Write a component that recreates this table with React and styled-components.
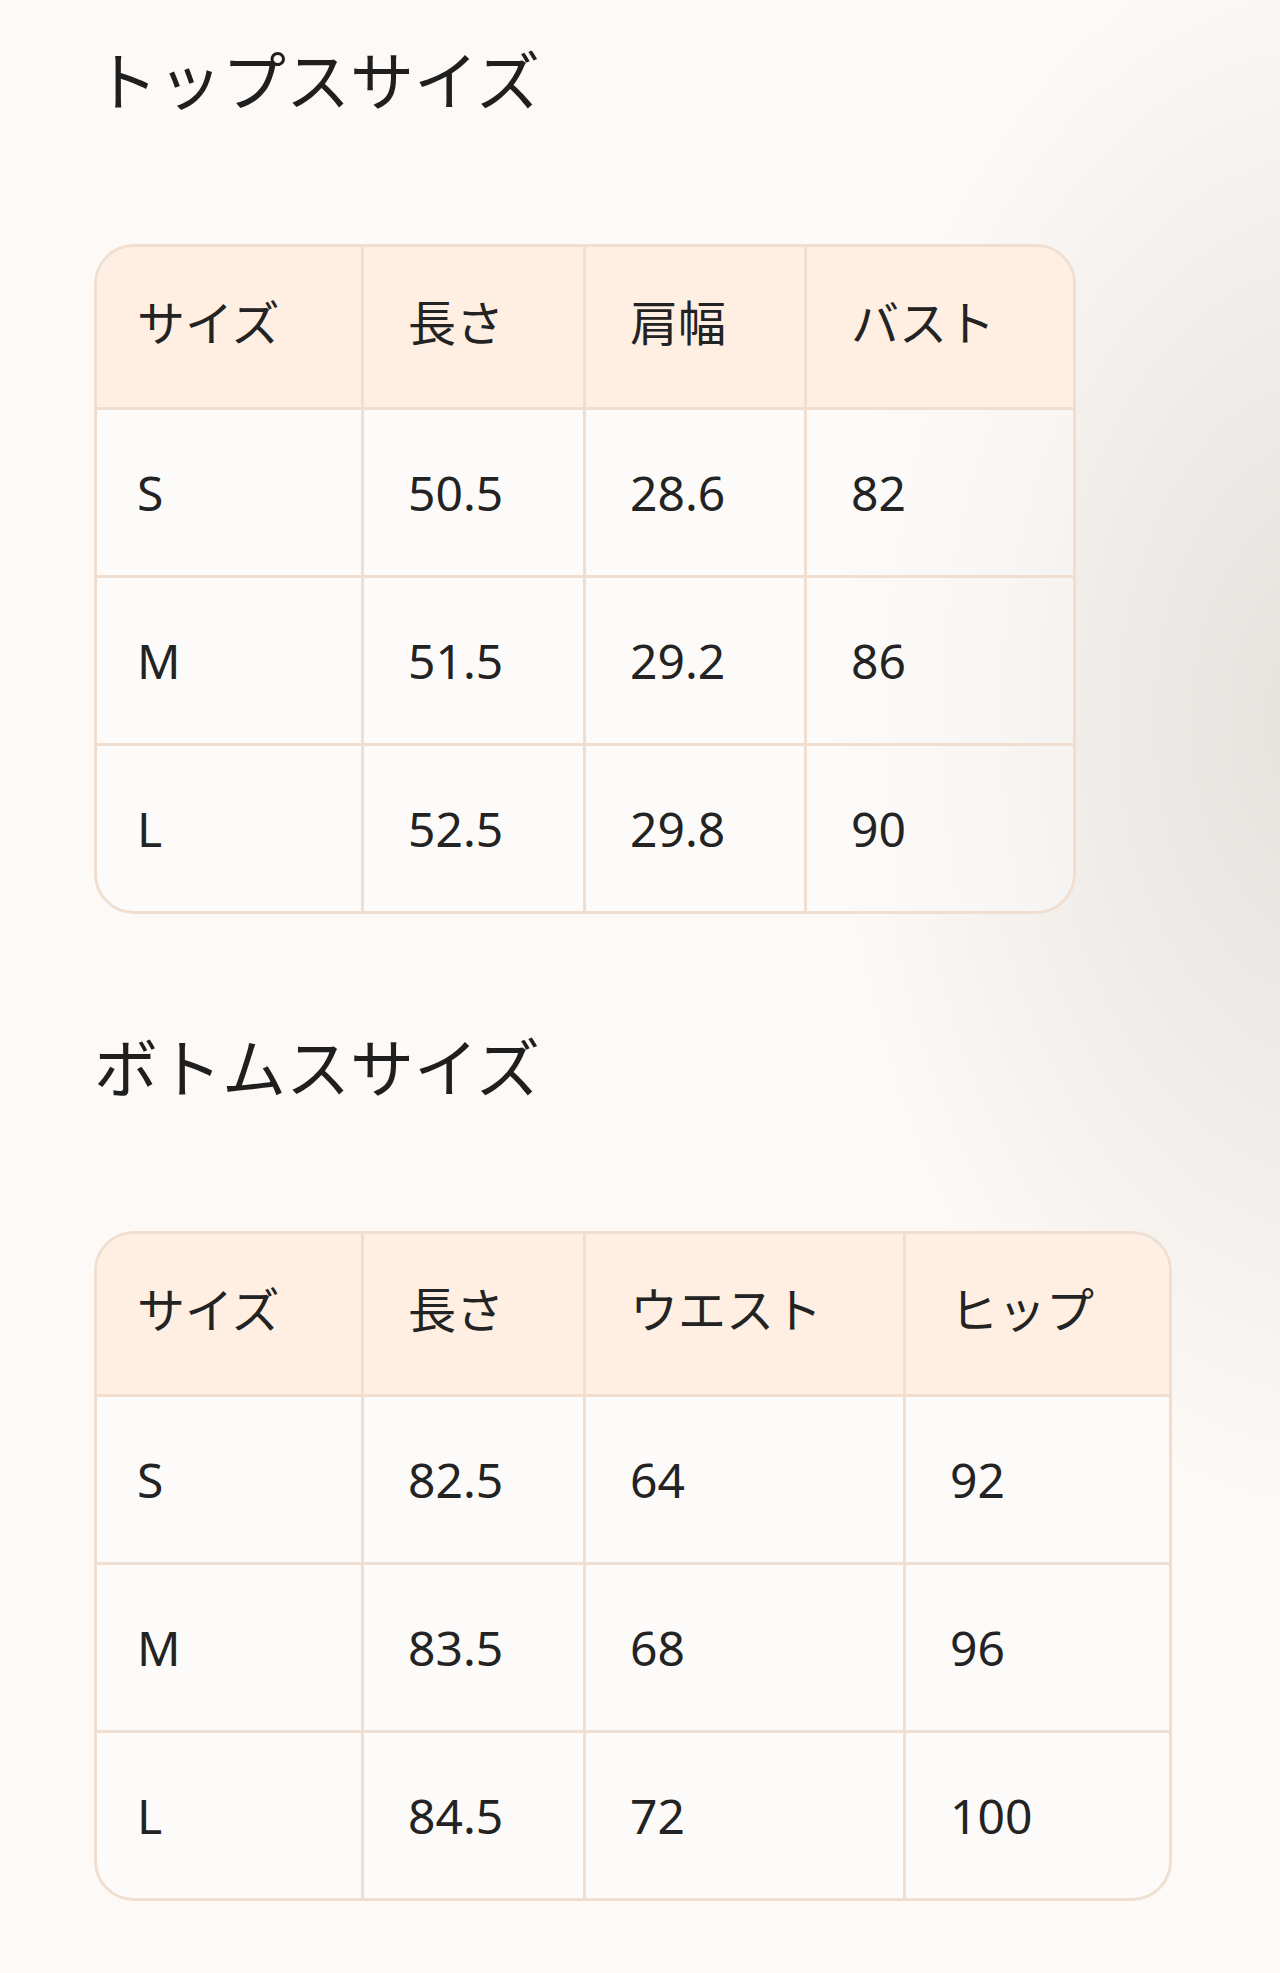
import React from "react";
import styled, { createGlobalStyle } from "styled-components";

const GlobalStyle = createGlobalStyle`
  body {
    margin: 0;
    background: #fcf9f6;
    font-family: "Noto Sans", "Noto Sans CJK JP", sans-serif;
    color: #222;
  }
`;

const Page = styled.div`
  min-height: 1973px;
  box-sizing: border-box;
  padding: 42px 0 60px 94px;
  background: radial-gradient(
      ellipse 500px 800px at 1330px 720px,
      rgba(205, 200, 195, 0.5),
      rgba(252, 249, 246, 0) 100%
    ),
    #fcf9f6;
  display: flex;
  flex-direction: column;
  gap: 115px;
`;

const Section = styled.section`
  display: flex;
  flex-direction: column;
  align-items: flex-start;
`;

const Title = styled.h2`
  margin: 0 0 125px;
  font-size: 64px;
  line-height: 77px;
  font-weight: 400;
  color: #1f1f1f;
`;

const Table = styled.div`
  display: grid;
  grid-template-columns: ${(p) => p.$cols};
  border: 3px solid #f0dfd0;
  border-radius: 40px;
  overflow: hidden;
`;

const Cell = styled.div`
  box-sizing: border-box;
  display: flex;
  align-items: center;
  height: ${(p) => (p.$head ? "163px" : p.$lastRow ? "165px" : "168px")};
  padding: 0 40px ${(p) => (p.$head ? "8px" : "0")}
    ${(p) => (p.$firstCol ? "40px" : "44px")};
  font-size: 48px;
  line-height: 72px;
  font-weight: 400;
  color: #232323;
  background: ${(p) => (p.$head ? "#feefe2" : "rgba(255, 255, 255, 0.35)")};
  border-right: ${(p) => (p.$lastCol ? "none" : "3px solid #f0dfd0")};
  border-bottom: ${(p) => (p.$lastRow ? "none" : "3px solid #f0dfd0")};
`;

const SizeTable = ({ cols, head, rows }) => (
  <Table $cols={cols}>
    {head.map((h, i) => (
      <Cell key={h} $head $firstCol={i === 0} $lastCol={i === head.length - 1}>
        {h}
      </Cell>
    ))}
    {rows.map((row, r) =>
      row.map((v, i) => (
        <Cell
          key={r + "-" + i}
          $firstCol={i === 0}
          $lastCol={i === row.length - 1}
          $lastRow={r === rows.length - 1}
        >
          {v}
        </Cell>
      ))
    )}
  </Table>
);

const tops = {
  cols: "267px 222px 221px 266px",
  head: ["サイズ", "長さ", "肩幅", "バスト"],
  rows: [
    ["S", "50.5", "28.6", "82"],
    ["M", "51.5", "29.2", "86"],
    ["L", "52.5", "29.8", "90"],
  ],
};

const bottoms = {
  cols: "267px 222px 320px 263px",
  head: ["サイズ", "長さ", "ウエスト", "ヒップ"],
  rows: [
    ["S", "82.5", "64", "92"],
    ["M", "83.5", "68", "96"],
    ["L", "84.5", "72", "100"],
  ],
};

export default function App() {
  return (
    <>
      <GlobalStyle />
      <Page>
        <Section>
          <Title>トップスサイズ</Title>
          <SizeTable {...tops} />
        </Section>
        <Section>
          <Title>ボトムスサイズ</Title>
          <SizeTable {...bottoms} />
        </Section>
      </Page>
    </>
  );
}
